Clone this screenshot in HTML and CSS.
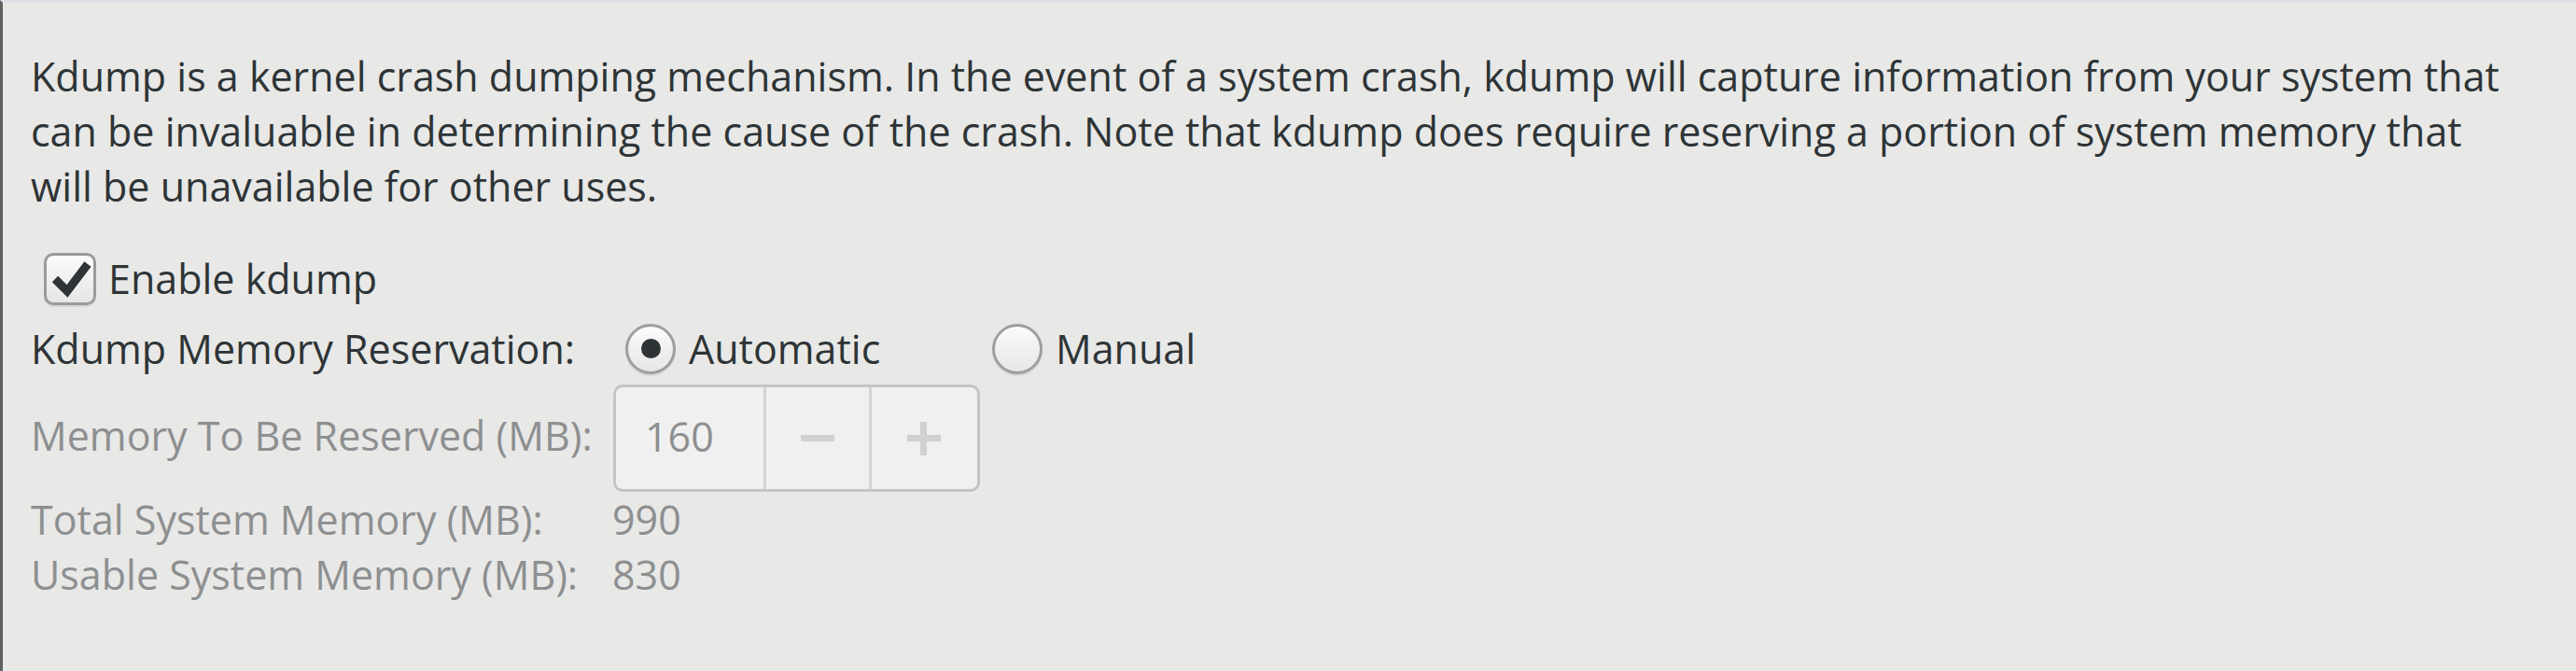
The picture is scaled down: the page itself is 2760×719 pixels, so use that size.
FILE: index.html
```html
<!DOCTYPE html>
<html lang="en">
<head>
<meta charset="utf-8">
<title>Kdump</title>
<link rel="stylesheet" href="styles.css">
</head>
<body>
<div class="window">
  <div class="content">
    <p class="desc">Kdump is a kernel crash dumping mechanism. In the event of a system crash, kdump will capture information from your system that<br>can be invaluable in determining the cause of the crash. Note that kdump does require reserving a portion of system memory that<br>will be unavailable for other uses.</p>

    <div class="check-row">
      <span class="checkbox">
        <svg viewBox="0 0 56 56" width="56" height="56" aria-hidden="true">
          <polyline points="12,28 25,41 47,12" fill="none" stroke="#2e3436" stroke-width="9" stroke-linecap="butt" stroke-linejoin="miter"/>
        </svg>
      </span>
      <span class="check-text">Enable kdump</span>
    </div>

    <div class="form">
      <div class="row row-radio">
        <div class="label">Kdump Memory Reservation:</div>
        <div class="radios">
          <div class="radio-item"><span class="radio checked"></span><span class="radio-text">Automatic</span></div>
          <div class="radio-item"><span class="radio"></span><span class="radio-text">Manual</span></div>
        </div>
      </div>
      <div class="row row-spin">
        <div class="label dim">Memory To Be Reserved (MB):</div>
        <div class="spin">
          <span class="spin-entry">160</span>
          <span class="spin-btn minus"></span>
          <span class="spin-btn plus"></span>
        </div>
      </div>
      <div class="row row-text">
        <div class="label dim">Total System Memory (MB):</div>
        <div class="value dim">990</div>
      </div>
      <div class="row row-text">
        <div class="label dim">Usable System Memory (MB):</div>
        <div class="value dim">830</div>
      </div>
    </div>
  </div>
</div>
</body>
</html>
```

FILE: styles.css
```css
html, body {
  margin: 0;
  padding: 0;
}

body {
  width: 2760px;
  height: 719px;
  background: #e8e8e7;
  font-family: "Open Sans", "Noto Sans", "DejaVu Sans", sans-serif;
  font-size: 43px;
  color: #2e3436;
  overflow: hidden;
}

.window {
  box-sizing: border-box;
  height: 719px;
  border-left: 3px solid #5f6061;
  border-top: 3px solid #dde1e7;
}

.content {
  padding: 49px 0 0 30px;
}

.desc {
  margin: 0;
  line-height: 59px;
  white-space: nowrap;
}

.check-row {
  display: flex;
  align-items: center;
  height: 59px;
  margin-top: 40px;
}

.checkbox {
  box-sizing: border-box;
  width: 56px;
  height: 56px;
  margin-left: 14px;
  border: 3px solid #999b9c;
  border-radius: 10px;
  background: linear-gradient(#fbfbfb, #e6e6e6);
  box-shadow: 0 2px 1px rgba(0,0,0,0.08);
  display: flex;
  align-items: center;
  justify-content: center;
  overflow: hidden;
}

.checkbox svg {
  flex: none;
}

.check-text {
  margin-left: 13px;
  line-height: 59px;
}

.form {
  margin-top: 16px;
  display: flex;
  flex-direction: column;
}

.row {
  display: flex;
  align-items: center;
}

.label {
  width: 623px;
  flex: none;
  white-space: nowrap;
  line-height: 59px;
}

.dim {
  color: #8d8f90;
}

.row-radio {
  height: 59px;
  margin-bottom: 9px;
}

.radios {
  display: flex;
}

.radio-item {
  width: 393px;
  box-sizing: border-box;
  padding-left: 14px;
  display: flex;
  align-items: center;
}

.radio {
  box-sizing: border-box;
  width: 54px;
  height: 54px;
  border-radius: 50%;
  border: 3px solid #9c9e9f;
  background: linear-gradient(#fbfbfb, #e6e6e6);
  box-shadow: 0 2px 1px rgba(0,0,0,0.08);
  display: flex;
  align-items: center;
  justify-content: center;
  flex: none;
}

.radio.checked::after {
  content: "";
  width: 21px;
  height: 21px;
  border-radius: 50%;
  background: #2e3436;
}

.radio-text {
  margin-left: 14px;
  line-height: 59px;
}

.row-spin {
  height: 115px;
}

.row-spin .label {
  padding-bottom: 7px;
}

.spin {
  box-sizing: border-box;
  display: flex;
  width: 393px;
  height: 115px;
  border: 3px solid #c3c4c4;
  border-radius: 10px;
  background: #f0f0f0;
  margin-left: 1px;
}

.spin-entry {
  width: 162px;
  box-sizing: border-box;
  padding: 0 0 5px 31px;
  display: flex;
  align-items: center;
  color: #8d8f90;
  border-right: 3px solid #d3d4d4;
}

.spin-btn {
  position: relative;
  width: 114px;
  box-sizing: border-box;
}

.spin-btn.minus {
  border-right: 3px solid #d3d4d4;
}

.spin-btn::before {
  content: "";
  position: absolute;
  left: 50%;
  top: 50%;
  width: 36px;
  height: 7px;
  margin-left: -18px;
  margin-top: -4px;
  background: #cfd0d0;
}

.spin-btn.plus::after {
  content: "";
  position: absolute;
  left: 50%;
  top: 50%;
  width: 7px;
  height: 36px;
  margin-left: -4px;
  margin-top: -18px;
  background: #cfd0d0;
}

.row-text {
  height: 59px;
}

.value {
  line-height: 59px;
}
```
